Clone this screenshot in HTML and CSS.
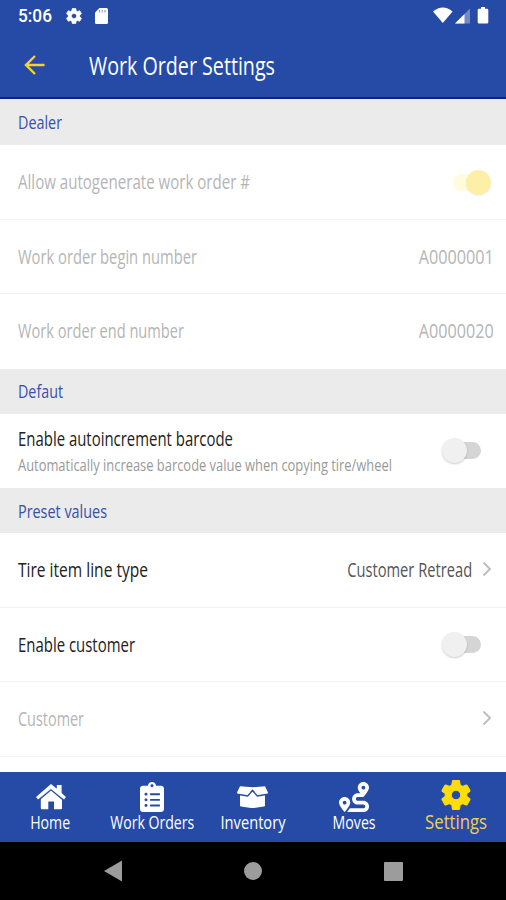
FILE: index.html
```
<!DOCTYPE html>
<html lang="en">
<head>
<meta charset="utf-8">
<title>Work Order Settings</title>
<link rel="stylesheet" href="styles.css">
</head>
<body>
<svg class="defs" width="0" height="0"><defs>
  <symbol id="cog" viewBox="2 2 20 20"><path stroke="currentColor" stroke-width=".7" d="M19.140 12.940c.04-.3.06-.61.06-.94 0-.32-.02-.64-.07-.94l2.030-1.580c.18-.14.23-.41.12-.61l-1.920-3.320c-.12-.22-.37-.29-.59-.22l-2.390.96c-.5-.38-1.030-.7-1.620-.94l-.36-2.540c-.04-.24-.24-.41-.48-.41h-3.840c-.24 0-.43.17-.47.41l-.36 2.540c-.59.24-1.130.57-1.620.94l-2.390-.96c-.22-.08-.47 0-.59.22L2.740 8.870c-.12.21-.08.47.12.61l2.030 1.580c-.05.3-.09.63-.09.94s.02.64.07.94l-2.030 1.580c-.18.14-.23.41-.12.61l1.920 3.320c.12.22.37.29.59.22l2.390-.96c.5.38 1.030.7 1.620.94l.36 2.540c.05.24.24.41.48.41h3.840c.24 0 .44-.17.47-.41l.36-2.540c.59-.24 1.130-.56 1.620-.94l2.390.96c.22.08.47 0 .59-.22l1.920-3.320c.12-.22.07-.47-.12-.61l-2.010-1.580zM12 15.200c-1.770 0-3.200-1.430-3.200-3.200s1.430-3.200 3.200-3.200 3.200 1.430 3.200 3.200-1.430 3.200-3.200 3.200z"/></symbol>
  <symbol id="chevron" viewBox="0 0 10 16"><path d="M1.500 1.500L8 8l-6.500 6.500" fill="none" stroke="#bdbdbd" stroke-width="1.900"/></symbol>
</defs></svg>
<div class="screen">
  <header>
    <div class="status">
      <span class="clock fit" data-w="34">5:06</span>
      <svg class="s-cog" width="16" height="16"><use href="#cog"/></svg>
      <svg class="s-card" width="13" height="16" viewBox="0 0 13 16"><path d="M4.500 0H11.500Q13 0 13 1.500V14.500Q13 16 11.500 16H1.500Q0 16 0 14.500V4.500Z"/><path class="slots" d="M4.500 2v2.500M7.200 2v2.500M9.900 2v2.500"/></svg>
      <svg class="s-right" width="58" height="18" viewBox="0 0 58 18">
        <path d="M0 4.500Q9.800-3.500 19.600 4.500L9.800 16Z"/>
        <path opacity=".35" d="M22 16.500L37 1.500V16.500Z"/><path d="M22 16.500L31.500 7V16.500Z"/>
        <path d="M48 0h4v1.800h2q1.300 0 1.300 1.300V15.200q0 1.300-1.300 1.300H46q-1.300 0-1.300-1.300V3.100q0-1.300 1.300-1.300h2Z"/>
      </svg>
    </div>
    <div class="appbar">
      <svg class="back" width="21" height="20" viewBox="0 0 21 20"><path d="M20.500 10H2M11 1L2 10l9 9"/></svg>
      <h1><span class="fit" data-w="186">Work Order Settings</span></h1>
    </div>
  </header>
  <main>
    <h2><span class="fit" data-w="44">Dealer</span></h2>
    <div class="row off"><span class="fit" data-w="232">Allow autogenerate work order #</span><i class="switch on"></i></div>
    <div class="row off"><span class="fit" data-w="179">Work order begin number</span><span class="fit right" data-w="75">A0000001</span></div>
    <div class="row off"><span class="fit" data-w="166">Work order end number</span><span class="fit right" data-w="75">A0000020</span></div>
    <h2><span class="fit" data-w="45">Defaut</span></h2>
    <div class="row"><div class="stack"><span class="fit" data-w="215">Enable autoincrement barcode</span><small class="fit" data-w="374">Automatically increase barcode value when copying tire/wheel</small></div><i class="switch"></i></div>
    <h2><span class="fit" data-w="89">Preset values</span></h2>
    <div class="row"><span class="fit" data-w="130">Tire item line type</span><span class="value"><span class="fit right" data-w="125">Customer Retread</span><svg width="10" height="16"><use href="#chevron"/></svg></span></div>
    <div class="row"><span class="fit" data-w="117">Enable customer</span><i class="switch"></i></div>
    <div class="row off"><span class="fit" data-w="66">Customer</span><span class="value"><svg width="10" height="16"><use href="#chevron"/></svg></span></div>
  </main>
  <nav class="tabs">
    <a><svg width="30" height="30" viewBox="0 0 30 30"><path d="M15 6.500L26 16V26Q26 27.200 25 27.200H18V19.500H12.300V27.200H6Q4.800 27.200 4.800 26V16Z"/><path class="gap" d="M2.500 18.300L15 7.800L27.500 18.300"/><path d="M15 2L20.800 6.800V3H25.600V11L30 15L28 17.600L15 6.800L2 17.600L0 15Z"/></svg><span class="fit center" data-w="40">Home</span></a>
    <a><svg width="24" height="30" viewBox="0 0 384 512" preserveAspectRatio="none"><path d="M336 64h-80c0-35.300-28.700-64-64-64s-64 28.700-64 64H48C21.500 64 0 85.500 0 112v352c0 26.500 21.500 48 48 48h288c26.500 0 48-21.500 48-48V112c0-26.500-21.500-48-48-48zM96 424c-13.300 0-24-10.700-24-24s10.700-24 24-24 24 10.700 24 24-10.700 24-24 24zm0-96c-13.300 0-24-10.700-24-24s10.700-24 24-24 24 10.700 24 24-10.700 24-24 24zm0-96c-13.300 0-24-10.700-24-24s10.700-24 24-24 24 10.700 24 24-10.700 24-24 24zm96-192c13.300 0 24 10.700 24 24s-10.700 24-24 24-24-10.700-24-24 10.700-24 24-24zm128 368c0 4.400-3.600 8-8 8H168c-4.400 0-8-3.600-8-8v-16c0-4.400 3.600-8 8-8h144c4.400 0 8 3.600 8 8v16zm0-96c0 4.400-3.600 8-8 8H168c-4.400 0-8-3.600-8-8v-16c0-4.400 3.600-8 8-8h144c4.400 0 8 3.600 8 8v16zm0-96c0 4.400-3.600 8-8 8H168c-4.400 0-8-3.600-8-8v-16c0-4.400 3.600-8 8-8h144c4.400 0 8 3.600 8 8v16z"/></svg><span class="fit center" data-w="84">Work Orders</span></a>
    <a><svg width="31" height="30" viewBox="0 0 31 30"><path d="M3 10H28V23.200Q28 24.300 26.800 24.600L17 26.100H14L4.200 24.600Q3 24.300 3 23.200Z"/><path d="M3 4.300L15.500 5.300L28 4.300L31 10.500Q31 11.500 30 11.800L20.500 13.300L15.500 7.500L10.500 13.300L1 11.800Q0 11.500 0 10.500Z"/><path class="gap" d="M2 12.500L10.700 14L15.500 8.500L20.300 14L29 12.500"/></svg><span class="fit center" data-w="65">Inventory</span></a>
    <a><svg width="30" height="30" viewBox="0 0 512 512"><path d="M416 320h-96c-17.600 0-32-14.400-32-32s14.400-32 32-32h96s96-107 96-160-43-96-96-96-96 43-96 96c0 25.500 22.200 63.400 45.300 96H320c-52.900 0-96 43.100-96 96s43.100 96 96 96h96c17.600 0 32 14.400 32 32s-14.400 32-32 32H185.500c-16 24.800-33.800 47.700-47.300 64H416c52.900 0 96-43.100 96-96s-43.100-96-96-96zm0-256c17.700 0 32 14.300 32 32s-14.300 32-32 32-32-14.300-32-32 14.300-32 32-32zM96 256c-53 0-96 43-96 96s96 160 96 160 96-107 96-160-43-96-96-96zm0 128c-17.700 0-32-14.300-32-32s14.300-32 32-32 32 14.300 32 32-14.300 32-32 32z"/></svg><span class="fit center" data-w="43">Moves</span></a>
    <a class="active"><svg width="30" height="30"><use href="#cog"/></svg><span class="fit center" data-w="62">Settings</span></a>
  </nav>
  <div class="system">
    <svg width="18" height="22" viewBox="0 0 18 22"><path d="M0 11L18 .5V21.500Z"/></svg>
    <svg width="18" height="18"><circle cx="9" cy="9" r="9"/></svg>
    <svg width="19" height="19"><rect width="19" height="19" rx="1"/></svg>
  </div>
</div>
<script src="script.js"></script>
</body>
</html>
```
FILE: styles.css
```
* { box-sizing: border-box; }
body { margin: 0; background: #fff; font-family: "Open Sans", "Noto Sans", sans-serif; }
.defs { position: absolute; }
.screen { width: 506px; height: 900px; display: flex; flex-direction: column; overflow: hidden; }
svg { display: block; flex: none; }
.fit { display: inline-block; white-space: nowrap; transform-origin: left center; }
.fit.right { transform-origin: right center; }
.fit.center { transform-origin: center; }

header { height: 99px; flex: none; background: #264ba6; border-bottom: 2px solid #0b2391; color: #fff; }
.status { height: 32px; display: flex; align-items: center; padding: 0 15px 0 18px; fill: #fff; }
.clock { font: 500 18px/20px Roboto, sans-serif; width: 34px; }
.s-cog { margin-left: 14px; }
.s-card { margin-left: 13px; }
.slots { stroke: #8da0cf; stroke-width: 1.2; }
.s-right { margin-left: auto; }
.appbar { height: 66px; display: flex; align-items: center; padding-left: 24px; }
.back { fill: none; stroke: #f5d32c; stroke-width: 2.4; }
h1 { margin: 0 0 0 44px; font-size: 25px; font-weight: 400; line-height: 34px; }

main { height: 673px; flex: none; overflow: hidden; }
h2 { height: 45px; margin: 0; padding: 0 18px 1px; display: flex; align-items: center; background: #ebebeb; color: #3850a6; font-size: 18.500px; font-weight: 400; }
h2:first-child { height: 46px; }
.row { height: 74.500px; display: flex; align-items: center; justify-content: space-between; padding: 1px 12px 0 18px; border-bottom: 1.500px solid #f1f1f1; color: #222; font-size: 20px; line-height: 26px; }
.row:has(+ h2) { border-bottom-color: transparent; }
.off { color: #b5b5b5; }
.stack { width: 400px; display: flex; flex-direction: column; align-items: flex-start; padding-top: 2px; }
small { font-size: 16px; color: #999; }
.value { display: flex; align-items: center; gap: 10px; color: #555; }
.value svg { margin: -3px 2px 0 0; }
.switch { position: relative; width: 35px; height: 17px; margin-right: 13px; border-radius: 9px; background: #d5d5d5; }
.switch::before { content: ""; position: absolute; left: -4px; top: -4px; width: 25px; height: 25px; border-radius: 50%; background: #f0f0f0; box-shadow: 0 1px 2px #0003; }
.switch.on { background: #fffbdc; margin-right: 6px; }
.switch.on::before { left: 13px; background: #fdefa8; box-shadow: 0 1px 1px #0001; }

.tabs { height: 70px; flex: none; display: grid; grid-template-columns: repeat(5, minmax(0, 1fr)); background: #264ba6; }
.tabs a { display: flex; flex-direction: column; align-items: center; padding-top: 10px; color: #fff; fill: #fff; font-size: 18.500px; line-height: 20px; }
.tabs .gap { fill: none; stroke: #264ba6; stroke-width: 1.3; }
.tabs .active { color: #f0cf50; fill: #ffdd0a; font-size: 20px; padding: 8px 0 0 2px; }
.tabs .active svg { color: #ffdd0a; }
.tabs .active span { margin-top: 2px; }
.system { height: 58px; flex: none; display: flex; align-items: center; justify-content: center; gap: 122px; background: #000; fill: #9c9c9c; }
```
FILE: script.js
```
document.querySelectorAll('.fit').forEach(el => {
  const range = document.createRange();
  range.selectNodeContents(el);
  const natural = range.getBoundingClientRect().width;
  el.style.transform = `scaleX(${el.dataset.w / natural})`;
});
```
